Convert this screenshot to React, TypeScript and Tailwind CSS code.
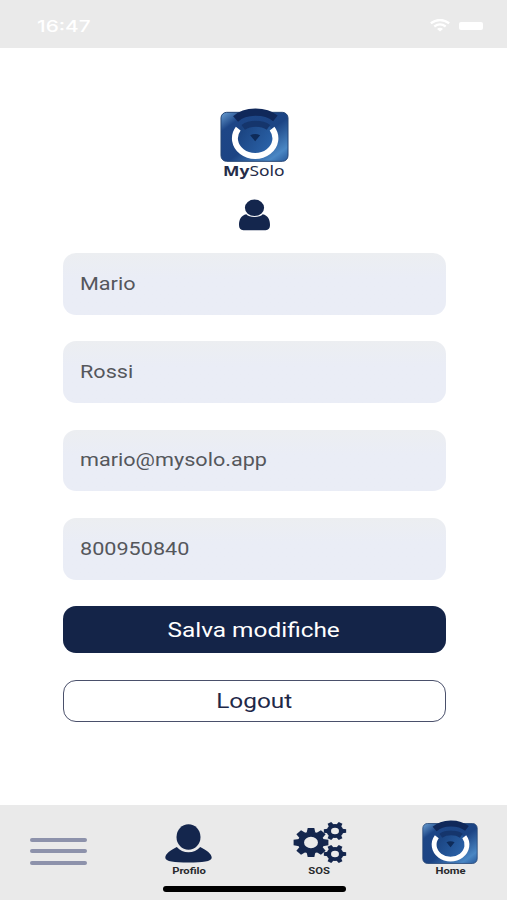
import type { ReactNode } from "react";

const fields = ["Mario", "Rossi", "mario@mysolo.app", "800950840"];

function Logo({ className, id }: { className: string; id: string }) {
    return (
        <svg className={className} viewBox="28 24 208 162" preserveAspectRatio="none" fill="none">
            <defs>
                <linearGradient id={id} x1="0" y1="0" x2="1" y2="1">
                    <stop offset="0" stopColor="#6ba0d3" />
                    <stop offset="0.2" stopColor="#1d4687" />
                    <stop offset="0.55" stopColor="#1c4484" />
                    <stop offset="0.85" stopColor="#4a87c4" />
                    <stop offset="1" stopColor="#27589a" />
                </linearGradient>
                <linearGradient id={id + "c"} x1="0" y1="0" x2="1" y2="0.6">
                    <stop offset="0" stopColor="#173c77" />
                    <stop offset="1" stopColor="#2a62a8" />
                </linearGradient>
            </defs>
            <rect x="31" y="37" width="202" height="147" rx="17" fill={"url(#" + id + ")"} stroke="#244474" strokeWidth="3" />
            <ellipse cx="134" cy="114" rx="58" ry="52" fill={"url(#" + id + "c)"} />
            <path d="M75 57 C104 30 164 30 195 55" stroke="#10285a" strokeWidth="22" />
            <path d="M98 82 C118 68 154 68 174 82" stroke="#15356c" strokeWidth="18" />
            <path d="M83 86 A61 53 0 1 0 185 86" stroke="#fff" strokeWidth="18" />
            <path d="M119 106 Q134 98 149 106 L134 124 Z" fill="#0e2b59" />
        </svg>
    );
}

function Gear({ cx, cy, r, teeth, hole }: { cx: number; cy: number; r: number; teeth: number; hole: number }) {
    const angles = Array.from({ length: teeth }, (_, i) => (i * 360) / teeth);
    const body = r * 0.75;
    return (
        <g transform={`translate(${cx} ${cy}) scale(1.2 1)`}>
            <circle r={(body + hole) / 2} fill="none" stroke="#14264d" strokeWidth={body - hole} />
            {angles.map((a) => (
                <path
                    key={a}
                    transform={`rotate(${a})`}
                    d={`M${body - 1} ${-r * 0.25} L${r} ${-r * 0.19} V${r * 0.19} L${body - 1} ${r * 0.25} Z`}
                    fill="#14264d"
                />
            ))}
        </g>
    );
}

function NavItem({ label, children }: { label: string; children: ReactNode }) {
    return (
        <button type="button" className="flex w-[60px] flex-col items-center">
            <span className="flex h-[45px] items-end justify-center">{children}</span>
            <span className="translate-x-[0.5px] scale-x-[1.25] text-[9px] leading-[12px] font-bold text-[#292a2e]">{label}</span>
        </button>
    );
}

export default function App() {
    return (
        <div className="flex h-[900px] w-[507px] flex-col overflow-hidden bg-white font-['Roboto',sans-serif]">

            <header className="flex h-[48px] shrink-0 items-center justify-between bg-[#eaeaea] pt-[3px] pr-[24px] pl-[37px] text-white">
                <span className="origin-left scale-x-[1.3] font-['Inter',sans-serif] text-[16px] font-medium">16:47</span>
                <div className="flex items-center gap-[9px]">
                    <svg className="h-[13px] w-[20px]" viewBox="0 0 20 13" fill="none" stroke="currentColor" strokeWidth="2.3">
                        <path d="M.8 4.3 Q10 -2.4 19.2 4.3" />
                        <path d="M4.3 7.5 Q10 3.3 15.7 7.5" />
                        <path d="M7 10 Q10 7.7 13 10 L10 12.6 Z" fill="currentColor" stroke="none" />
                    </svg>
                    <span className="h-[8px] w-[24px] rounded-[2px] bg-white" />
                </div>
            </header>

            <main className="flex grow flex-col items-center pt-[60px] pr-[61.5px] pl-[62.5px]">
                <Logo id="main" className="h-[54px] w-[69px]" />
                <p className="scale-x-[1.29] font-['Noto_Sans',sans-serif] text-[13.5px] leading-[18px] text-[#252c49]">
                    <span className="font-bold">My</span>Solo
                </p>

                <svg className="mt-[19px] h-[32px] w-[33px]" viewBox="0 0 33 32" fill="#14264d">
                    <ellipse cx="16.5" cy="8.8" rx="9.6" ry="8.3" />
                    <path d="M8.3 15.2 C11 18.8 22 18.8 24.7 15.2 C30 16.5 32 20.5 32 26 C32 29.4 30.5 31.2 27.6 31.2 H5.4 C2.5 31.2 1 29.4 1 26 C1 20.5 3 16.5 8.3 15.2 Z" />
                </svg>

                <div className="mt-[22px] flex w-full flex-col gap-[26.5px]">
                    {fields.map((value) => (
                        <div key={value} className="flex h-[61.8px] items-center rounded-[13px] bg-linear-to-b from-[#eceef1] to-[#eaedf6] to-40% px-[17.5px]">
                            <span className="origin-left scale-x-[1.235] text-[17.5px] text-[#55575c]">{value}</span>
                        </div>
                    ))}

                    <button type="button" className="flex h-[47px] items-center justify-center rounded-[13px] bg-[#142448] text-white">
                        <span className="scale-x-[1.22] text-[20px]">Salva modifiche</span>
                    </button>
                    <button type="button" className="flex h-[42px] items-center justify-center rounded-[13px] border-[1.5px] border-[#4a506b] text-[#1e2848]">
                        <span className="scale-x-[1.22] text-[20px]">Logout</span>
                    </button>
                </div>
            </main>

            <nav className="relative flex h-[95px] shrink-0 justify-between bg-[#eaeaea] pt-[15px] pr-[27px] pl-[30px]">
                <button type="button" className="flex h-[62px] w-[57px] flex-col justify-center gap-[7.5px]">
                    <span className="h-[4px] w-full rounded-full bg-[#8d92ab]" />
                    <span className="h-[4px] w-full rounded-full bg-[#8d92ab]" />
                    <span className="h-[4px] w-full rounded-full bg-[#8d92ab]" />
                </button>
                <NavItem label="Profilo">
                    <svg className="mb-[2px] h-[39px] w-[48px]" viewBox="0 0 48 39" fill="#14264d">
                        <ellipse cx="24.5" cy="13" rx="12" ry="12.8" />
                        <path d="M12.8 22.9 C18.5 30 30.5 30 36.2 22.9 C42.5 26 47.7 29.5 47.7 33.8 C47.7 37.5 38.5 38.6 24.5 38.6 S1.3 37.5 1.3 33.8 C1.3 29.5 6.5 26 12.8 22.9 Z" />
                    </svg>
                </NavItem>
                <NavItem label="SOS">
                    <svg className="mb-[1px] ml-[2px] h-[42px] w-[54px] shrink-0" viewBox="0 0 54 42">
                        <Gear cx={18} cy={20.5} r={14.5} teeth={8} hole={5.8} />
                        <Gear cx={42} cy={9} r={9.3} teeth={6} hole={3.3} />
                        <Gear cx={42} cy={32} r={9.3} teeth={6} hole={3.3} />
                    </svg>
                </NavItem>
                <NavItem label="Home">
                    <Logo id="home" className="mb-px h-[44px] w-[56px]" />
                </NavItem>
                <span className="absolute bottom-[8px] left-[163px] h-[6px] w-[183px] rounded-full bg-black" />
            </nav>

        </div>
    );
}
